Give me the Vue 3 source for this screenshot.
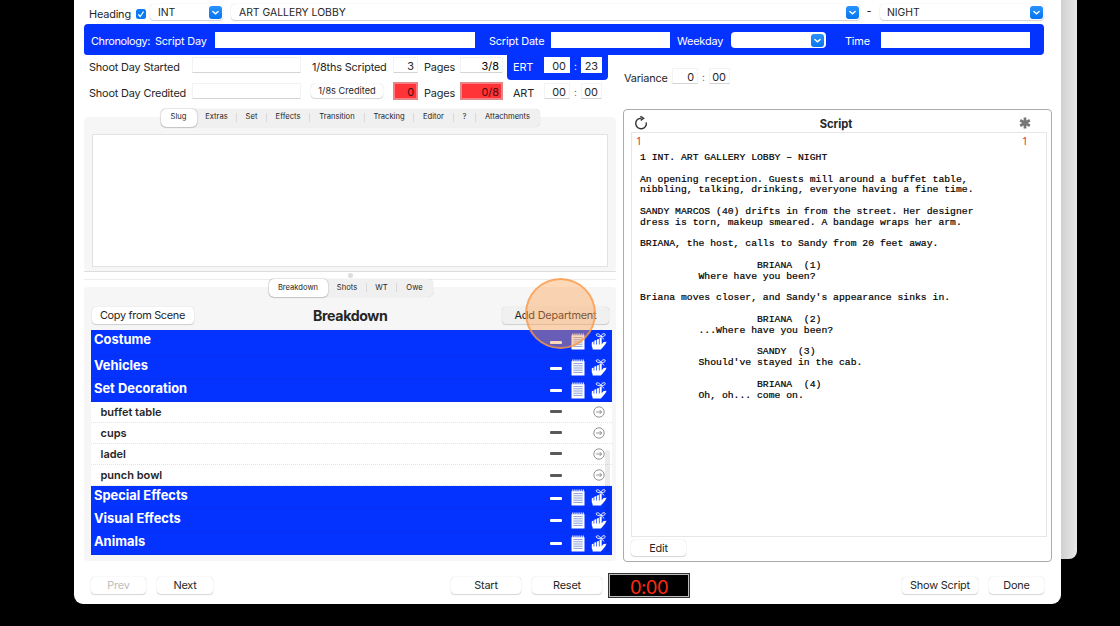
<script setup>
import { ref } from 'vue'

const slugTabs = [
  { name: 'Slug', width: 36 },
  { name: 'Extras', width: 40 },
  { name: 'Set', width: 30 },
  { name: 'Effects', width: 43 },
  { name: 'Transition', width: 55 },
  { name: 'Tracking', width: 49 },
  { name: 'Editor', width: 40 },
  { name: '?', width: 22 },
  { name: 'Attachments', width: 64 }
]
const breakdownTabs = [
  { name: 'Breakdown', width: 59 },
  { name: 'Shots', width: 39 },
  { name: 'WT', width: 30 },
  { name: 'Owe', width: 36 }
]
const slugTab = ref('Slug')
const breakdownTab = ref('Breakdown')

const rows = [
  { name: 'Costume', department: true, tall: true },
  { name: 'Vehicles', department: true },
  { name: 'Set Decoration', department: true },
  { name: 'buffet table' },
  { name: 'cups' },
  { name: 'ladel' },
  { name: 'punch bowl' },
  { name: 'Special Effects', department: true },
  { name: 'Visual Effects', department: true },
  { name: 'Animals', department: true }
]

const cue = ' '.repeat(20)
const line = ' '.repeat(10)
const script = [
  '1 INT. ART GALLERY LOBBY – NIGHT',
  '',
  'An opening reception. Guests mill around a buffet table,',
  'nibbling, talking, drinking, everyone having a fine time.',
  '',
  'SANDY MARCOS (40) drifts in from the street. Her designer',
  'dress is torn, makeup smeared. A bandage wraps her arm.',
  '',
  'BRIANA, the host, calls to Sandy from 20 feet away.',
  '',
  cue + 'BRIANA  (1)',
  line + 'Where have you been?',
  '',
  "Briana moves closer, and Sandy's appearance sinks in.",
  '',
  cue + 'BRIANA  (2)',
  line + '...Where have you been?',
  '',
  cue + 'SANDY  (3)',
  line + "Should've stayed in the cab.",
  '',
  cue + 'BRIANA  (4)',
  line + 'Oh, oh... come on.'
].join('\n')
</script>

<template>
  <div class="screen">
    <div class="window-behind"></div>
    <div class="window">
      <div class="heading-row">
        <span class="label heading-label">Heading</span>
        <span class="checkbox">
          <svg viewBox="0 0 10 10"><path d="M2.3 5.3 4.2 7.5 7.6 2.5" /></svg>
        </span>
        <div class="combo combo-int">
          <span>INT</span>
          <i class="chevron"><svg viewBox="0 0 12 12"><path d="M3.6 5 6 7.2 8.4 5" /></svg></i>
        </div>
        <div class="combo combo-place">
          <span>ART GALLERY LOBBY</span>
          <i class="chevron"><svg viewBox="0 0 12 12"><path d="M3.6 5 6 7.2 8.4 5" /></svg></i>
        </div>
        <span class="dash">-</span>
        <div class="combo combo-time">
          <span>NIGHT</span>
          <i class="chevron"><svg viewBox="0 0 12 12"><path d="M3.6 5 6 7.2 8.4 5" /></svg></i>
        </div>
      </div>

      <div class="chronology">
        <span class="label w-chrono">Chronology:</span>
        <span class="label w-script-day">Script Day</span>
        <span class="field f-script-day"></span>
        <span class="label w-script-date">Script Date</span>
        <span class="field f-script-date"></span>
        <span class="label w-weekday">Weekday</span>
        <div class="combo combo-weekday">
          <i class="chevron"><svg viewBox="0 0 12 12"><path d="M3.6 5 6 7.2 8.4 5" /></svg></i>
        </div>
        <span class="label w-time">Time</span>
        <span class="field f-time"></span>
      </div>

      <div class="meta">
        <div class="meta-rows">
          <div class="meta-row">
            <span class="label w-shoot">Shoot Day Started</span>
            <span class="field f-shoot"></span>
            <span class="label w-eighths">1/8ths Scripted</span>
            <span class="field f-eighths">3</span>
            <span class="label w-pages">Pages</span>
            <span class="field f-pages strong">3/8</span>
            <div class="timing ert">
              <span class="label w-rt">ERT</span>
              <span class="field f-min">00</span>
              <span class="colon">:</span>
              <span class="field f-sec">23</span>
            </div>
          </div>
          <div class="meta-row">
            <span class="label w-shoot">Shoot Day Credited</span>
            <span class="field f-shoot"></span>
            <div class="w-eighths"><button class="btn credited">1/8s Credited</button></div>
            <span class="field f-eighths red">0</span>
            <span class="label w-pages">Pages</span>
            <span class="field f-pages red">0/8</span>
            <div class="timing">
              <span class="label w-rt">ART</span>
              <span class="field f-min">00</span>
              <span class="colon">:</span>
              <span class="field f-sec">00</span>
            </div>
          </div>
        </div>
        <div class="variance">
          <span class="label w-variance">Variance</span>
          <span class="field f-var">0</span>
          <span class="colon">:</span>
          <span class="field f-sec">00</span>
        </div>
      </div>

      <div class="main">
        <div class="left">
          <section class="group slug-group">
            <div class="tabs">
              <button
                v-for="t in slugTabs"
                :key="t.name"
                :class="['tab', { active: t.name === slugTab }]"
                :style="{ width: t.width + 'px' }"
                @click="slugTab = t.name"
              >{{ t.name }}</button>
            </div>
            <div class="slug-text"></div>
          </section>
          <div class="splitter"><i></i></div>
          <section class="group breakdown-group">
            <div class="tabs">
              <button
                v-for="t in breakdownTabs"
                :key="t.name"
                :class="['tab', { active: t.name === breakdownTab }]"
                :style="{ width: t.width + 'px' }"
                @click="breakdownTab = t.name"
              >{{ t.name }}</button>
            </div>
            <div class="breakdown-head">
              <button class="btn copy">Copy from Scene</button>
              <h2>Breakdown</h2>
              <button class="btn add">Add Department</button>
            </div>
            <div class="list">
              <div
                v-for="row in rows"
                :key="row.name"
                :class="['row', row.department ? 'department' : 'item', { tall: row.tall }]"
              >
                <span class="row-name">{{ row.name }}</span>
                <i class="minus"></i>
                <template v-if="row.department">
                  <svg class="notepad" viewBox="0 0 14 17">
                    <path d="M.5 2.2h13v14.3H.5z" fill="#fff" />
                    <path d="M1.8.4v2M3.9.4v2M6 .4v2M8.1.4v2M10.2.4v2M12.3.4v2" stroke="#fff" stroke-width="1.1" />
                    <path d="M2.3 4.6h9.4M2.3 6.8h9.4M2.3 9h9.4M2.3 11.2h9.4M2.3 13.4h9.4" stroke="#6f86cf" stroke-width=".8" />
                  </svg>
                  <!-- hand with a string tied round the finger -->
                  <svg class="hand" viewBox="0 0 16 17">
                    <path d="M.8 9.2 2.6 8.6V12H.8ZM3.3 7.7 5.2 7.1V12H3.3ZM5.9 6.6 7.9 6V12H5.9ZM8.6 4.6H10.7V12H8.6Z" fill="#fff" />
                    <path d="M.8 11.4H10.5L12.6 9 15.6 8.8 14.4 11.2 11.2 14.9 9.8 16.6H1.6V15L.8 13.6Z" fill="#fff" />
                    <path d="M9.7 3.3C8.4.3 5.2.2 5.2 1.8 5.2 3.3 7.8 3.8 9.7 3.3ZM9.7 3.3C10.8.3 14.4 0 14.3 1.8 14.2 3.3 11.5 3.8 9.7 3.3ZM9.9 3.4 13.2 6.4" fill="none" stroke="#fff" stroke-width=".9" />
                  </svg>
                </template>
                <svg v-else class="arrow" viewBox="0 0 12 12">
                  <circle cx="6" cy="6" r="5.2" />
                  <path d="M3.2 6h5.4M6.6 3.9 8.7 6 6.6 8.1" />
                </svg>
              </div>
              <i class="scrollbar"></i>
            </div>
          </section>
        </div>

        <section class="script-panel">
          <header>
            <svg class="reload" viewBox="0 0 14 14">
              <path d="M7.5 2.2A5.3 5.3 0 1 0 12.2 6.3" />
              <path d="M6.4.2 9.6 2.2 6.7 4.4" />
            </svg>
            <h3>Script</h3>
            <svg class="asterisk" viewBox="0 0 12 12">
              <path d="M6 .6v10.8M1.2 3.3l9.6 5.4M10.8 3.3 1.2 8.7" />
            </svg>
          </header>
          <div class="page">
            <div class="scene-no"><span>1</span><span>1</span></div>
            <pre>{{ script }}</pre>
          </div>
          <button class="btn edit">Edit</button>
        </section>
      </div>

      <footer>
        <button class="btn prev" disabled>Prev</button>
        <button class="btn next">Next</button>
        <button class="btn start">Start</button>
        <button class="btn reset">Reset</button>
        <div class="timer">0:00</div>
        <button class="btn show-script">Show Script</button>
        <button class="btn done">Done</button>
      </footer>
    </div>
    <div class="click-mark"></div>
  </div>
</template>

<style>
body {
  background: #000;
  overflow: hidden;
}
</style>

<style scoped>
.screen {
  position: relative;
  width: 1120px;
  height: 626px;
  background: #000;
  overflow: hidden;
  font-family: Inter, "Liberation Sans", sans-serif;
  font-size: 11px;
  color: #262626;
}

.screen * {
  box-sizing: border-box;
}

.window-behind {
  position: absolute;
  left: 1040px;
  top: 0;
  width: 37px;
  height: 559px;
  border-radius: 0 0 8px 0;
  background: linear-gradient(90deg, #d0d0d0 57%, #e9e9e9);
}

.window {
  position: relative;
  width: 987px;
  height: 604px;
  margin-left: 74px;
  padding: 0 9px 0 10px;
  background: #fff;
  border-radius: 0 0 9px 9px;
}

.label {
  flex-shrink: 0;
  white-space: nowrap;
  line-height: 16px;
  font-size: 10.9px;
  letter-spacing: -0.17px;
}

.field {
  flex-shrink: 0;
  height: 16px;
  padding-right: 3px;
  background: #fff;
  border: 1px solid #f3f3f3;
  border-bottom-color: #d4d4d4;
  font-size: 10.9px;
  line-height: 17px;
  text-align: right;
  color: #262626;
}

.heading-row {
  display: flex;
  height: 24px;
  padding: 4px 8px 0 5px;
}

.heading-label {
  width: 47px;
  padding-top: 2px;
}

.checkbox {
  width: 10px;
  height: 10px;
  margin: 5px 4px 0 0;
  border-radius: 2.5px;
  background: #0a7bf5;
}

.checkbox svg {
  display: block;
  fill: none;
  stroke: #fff;
  stroke-width: 1.3;
}

.combo {
  display: flex;
  flex-shrink: 0;
  justify-content: space-between;
  height: 16px;
  padding: 2px 1.5px 0 7px;
  border-radius: 4px;
  background: #fff;
  box-shadow: 0 0 1px rgba(0, 0, 0, 0.2), 0 1px 1px rgba(0, 0, 0, 0.16);
  line-height: 14px;
  font-size: 10.4px;
}

.combo-int {
  width: 73px;
  padding-left: 8px;
}

.combo-place {
  width: 629px;
  margin-left: 8px;
  padding-left: 8px;
}

.combo-time {
  width: 164px;
}

.chevron {
  width: 13px;
  height: 13px;
  border-radius: 3px;
  background: linear-gradient(#2b93ff, #0574f0);
}

.chevron svg {
  display: block;
  fill: none;
  stroke: #fff;
  stroke-width: 1.3;
  stroke-linecap: round;
}

.dash {
  width: 20px;
  text-align: center;
  padding-right: 2px;
  line-height: 14px;
}

.chronology {
  display: flex;
  width: 960px;
  height: 31px;
  padding: 8px 0 0 7px;
  border-radius: 4px 4px 4px 3px;
  background: #0433ff;
}

.chronology .label {
  color: #fff;
  padding-top: 1px;
}

.chronology .field {
  border-color: #fff;
}

.chronology .w-chrono {
  letter-spacing: -0.35px;
}

.w-chrono { width: 64px; }
.w-script-day { width: 60px; }
.f-script-day { width: 260px; }
.w-script-date { width: 76px; padding-left: 14px; }
.f-script-date { width: 119px; }
.w-weekday { width: 61px; padding-left: 7px; }
.w-time { width: 55px; padding-left: 19px; }
.f-time { width: 149px; }

.combo-weekday {
  width: 95px;
  justify-content: flex-end;
  padding-top: 1.5px;
  padding-right: 2px;
  box-shadow: none;
}

.meta {
  display: flex;
  height: 54px;
}

.meta-rows {
  width: 524px;
}

.meta-row {
  display: flex;
  height: 26px;
  padding: 2px 0 0 5px;
}

.meta-row .label {
  padding-top: 2px;
}

.w-shoot { width: 103px; }
.f-shoot { width: 109px; }
.w-eighths { width: 92px; padding-left: 11px; }
.f-eighths { width: 25px; }
.w-pages { width: 42px; padding-left: 6px; }
.f-pages { width: 43px; }
.w-rt { width: 37px; padding-left: 6px; }
.f-min { width: 26px; }
.f-sec { width: 21px; }
.w-variance { width: 48px; }
.f-var { width: 26px; }

.strong {
  color: #000;
}

.field.red {
  background: #ff3438;
  border: 1px solid #d98a8a;
  box-shadow: inset 0 0 0 1px #ff7d80;
  margin-top: -1px;
  height: 18px;
  line-height: 19px;
  color: #4b0a0a;
}

.timing {
  display: flex;
  width: 101px;
  height: 26px;
  margin: -3px 0 0 4px;
  padding-top: 3px;
}

.ert {
  border-radius: 0 0 4px 4px;
  background: #0433ff;
}

.ert .label,
.ert .colon {
  color: #fff;
}

.ert .field {
  border-color: #fff;
}

.colon {
  width: 11px;
  text-align: center;
  line-height: 19px;
  font-size: 10px;
  color: #666;
}

.variance {
  display: flex;
  padding: 13px 0 0 16px;
}

.variance .label {
  padding-top: 2px;
}

.btn {
  flex-shrink: 0;
  height: 17px;
  padding: 0;
  border: 0;
  border-radius: 4px;
  background: #fff;
  box-shadow: 0 0 1px rgba(0, 0, 0, 0.25), 0 1px 1px rgba(0, 0, 0, 0.14);
  font-family: inherit;
  font-size: 10.9px;
  line-height: 17px;
  letter-spacing: -0.2px;
  color: #262626;
  text-align: center;
  white-space: nowrap;
}

.btn.credited {
  display: block;
  width: 72px;
  height: 14px;
  margin: 1px 0 0 -1px;
  font-size: 9.2px;
  line-height: 14px;
  letter-spacing: 0;
}

.main {
  display: flex;
  height: 453px;
}

.left {
  width: 532px;
  margin-right: 7px;
}

.group {
  border-radius: 4px;
  background: #f6f6f6;
}

.slug-group {
  height: 154px;
  margin-top: 8px;
  padding: 0 8px;
}

.tabs {
  display: flex;
  position: relative;
  top: -8px;
  width: max-content;
  height: 18px;
  margin: 0 auto;
  border-radius: 5px;
  background: #f0f0f0;
  box-shadow: 0 0 1px rgba(0, 0, 0, 0.25);
}

.breakdown-group .tabs {
  margin-left: 177.5px;
}

.tab {
  position: relative;
  padding: 0;
  border: 0;
  background: transparent;
  font-family: inherit;
  font-size: 7.6px;
  line-height: 16px;
  color: #262626;
  text-align: center;
  white-space: nowrap;
}

.slug-group .tab {
  padding-bottom: 2px;
}

.tab:not(:last-child):not(.active)::after {
  content: '';
  position: absolute;
  right: 0;
  top: 4px;
  width: 1px;
  height: 9px;
  background: #d9d9d9;
}

.tab.active {
  border-radius: 5px;
  background: #fff;
  box-shadow: 0 0 1.5px rgba(0, 0, 0, 0.4), 0 1px 1px rgba(0, 0, 0, 0.12);
}

.slug-text {
  height: 133px;
  margin-top: -1.5px;
  border: 1px solid #e2e2e2;
  background: #fff;
}

.splitter {
  display: flex;
  justify-content: center;
  height: 9px;
  padding-top: 1px;
  border-top: 1px solid #dedede;
  border-bottom: 1px solid #ececec;
}

.splitter i {
  width: 5px;
  height: 5px;
  border-radius: 50%;
  background: #dcdcdc;
}

.breakdown-group {
  height: 274px;
  margin-top: 7px;
  padding: 0 4px 0 7px;
}

.breakdown-head {
  display: flex;
  height: 25px;
  padding: 1.5px 3px 0 0.5px;
}

.copy {
  width: 102px;
}

.breakdown-head .copy {
  letter-spacing: -0.3px;
}

.breakdown-head h2 {
  flex: 1;
  margin: 0;
  padding-left: 5px;
  text-align: center;
  font-size: 14.2px;
  line-height: 17px;
  font-weight: 700;
  letter-spacing: -0.4px;
}

.add {
  width: 107px;
  background: #f0f0f0;
}

.list {
  position: relative;
  width: 521px;
}

.row {
  display: flex;
  position: relative;
}

.row-name {
  width: 459px;
  white-space: nowrap;
}

.department {
  height: 22.8px;
  padding-left: 3px;
  background: #0433ff;
  border-bottom: 1px solid #0730ee;
  color: #fff;
  font-size: 12.9px;
  line-height: 20px;
  font-weight: 700;
}

.department .row-name {
  width: 456px;
}

.tall {
  height: 26px;
}

.item {
  height: 21.15px;
  padding-left: 9.5px;
  background: #fff;
  border-bottom: 1px dotted #e3e3e3;
  font-size: 11px;
  line-height: 21px;
  font-weight: 600;
}

.item .row-name {
  width: 449.5px;
}

.minus {
  width: 12px;
  height: 3px;
  margin-top: 10.5px;
  border-radius: 1px;
  background: #fff;
}

.item .minus {
  margin-top: 8.5px;
  background: #5a5a5a;
}

.notepad {
  width: 14px;
  height: 17px;
  margin: 3px 0 0 9px;
}

.hand {
  width: 16px;
  height: 17px;
  margin: 3px 0 0 6px;
}

.arrow {
  width: 12px;
  height: 12px;
  margin: 4px 0 0 31px;
  fill: none;
  stroke: #777;
  stroke-width: 0.8;
}

.scrollbar {
  position: absolute;
  right: 2px;
  top: 120px;
  width: 5px;
  height: 103px;
  border-radius: 3px;
  background: rgba(0, 0, 0, 0.08);
}

.script-panel {
  width: 429px;
  height: 453px;
  margin-top: -0.5px;
  padding: 0 4px 0 7px;
  border: 1px solid #ababab;
  border-radius: 4px;
}

.script-panel header {
  display: flex;
  height: 22px;
  padding: 6px 16px 0 3px;
}

.reload {
  width: 14px;
  height: 14px;
  fill: none;
  stroke: #333;
  stroke-width: 1.4;
}

.script-panel h3 {
  flex: 1;
  margin: 0;
  padding-left: 5px;
  text-align: center;
  font-size: 11.2px;
  line-height: 16px;
  font-weight: 700;
}

.asterisk {
  width: 12px;
  height: 12px;
  margin-top: 1px;
  stroke: #777;
  stroke-width: 2.7;
}

.page {
  height: 405px;
  border: 1px solid #e6e6e6;
}

.scene-no {
  display: flex;
  justify-content: space-between;
  padding: 1px 18px 0 4px;
  height: 20.5px;
  color: #e5262d;
  font-family: "Noto Sans", sans-serif;
  font-size: 10.5px;
  line-height: 14px;
}

.page pre {
  margin: 0 0 0 8px;
  font-family: "Liberation Mono", monospace;
  font-size: 9.75px;
  line-height: 10.8px;
  color: #000;
  -webkit-text-stroke: 0.2px #000;
}

.edit {
  display: block;
  width: 55px;
  height: 16px;
  margin-top: 3px;
  line-height: 16px;
}

footer {
  display: flex;
  padding: 15px 0 0 7px;
}

.prev {
  width: 55px;
}

.prev:disabled {
  color: #bdbdbd;
}

.next {
  width: 56px;
  margin-left: 11px;
}

.start {
  width: 70px;
  margin-left: 238px;
}

.reset {
  width: 70px;
  margin-left: 11px;
}

.timer {
  width: 82px;
  height: 25px;
  margin: -4px 0 0 6px;
  border: 1px solid #333;
  background: #000;
  box-shadow: inset 0 0 0 1px #bbb;
  color: #ff2a12;
  font-size: 18.5px;
  line-height: 26px;
  text-align: center;
  letter-spacing: -0.6px;
}

.show-script {
  width: 76px;
  margin-left: 212px;
}

.done {
  width: 55px;
  margin-left: 11px;
}

.click-mark {
  position: absolute;
  left: 524.5px;
  top: 277.5px;
  width: 71px;
  height: 71px;
  border: 2.5px solid rgba(250, 152, 70, 0.75);
  border-radius: 50%;
  background: rgba(255, 158, 75, 0.4);
}
</style>
